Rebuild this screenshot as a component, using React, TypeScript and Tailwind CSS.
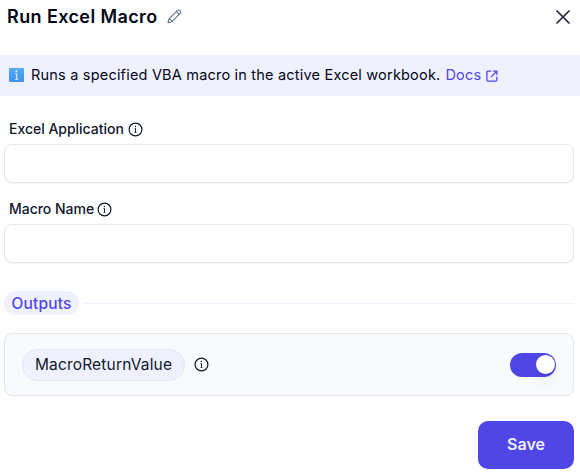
import React from "react";

function InfoIcon({ className = "" }: { className?: string }) {
  return (
    <svg className={"shrink-0 " + className} width="15" height="15" viewBox="0 0 15 15" fill="none" stroke="currentColor">
      <circle cx="7.5" cy="7.5" r="6.4" strokeWidth="1.2" />
      <path d="M6.5 6.6h1v3.9" strokeWidth="1" />
      <path d="M6.4 10.5h2.2" strokeWidth=".6" />
      <circle cx="7.4" cy="4.6" r=".75" fill="currentColor" stroke="none" />
    </svg>
  );
}

function PencilIcon() {
  return (
    <svg className="shrink-0 text-[#64748b]" width="15" height="15" viewBox="0 0 15 15" fill="none" stroke="currentColor" strokeWidth="1.1" strokeLinejoin="round" strokeLinecap="round">
      <path d="M1 13.6l.9-3.8 8.4-8.2a1.9 1.9 0 0 1 2.9 0 1.9 1.9 0 0 1 0 2.8l-8.3 8.3L1 13.6zM9.4 2.6l2.9 2.9M2.1 10c1.5.2 2.4 1 2.7 2.6" />
    </svg>
  );
}

function DocsIcon() {
  return (
    <svg className="mt-[2px] shrink-0" width="12" height="12" viewBox="0 0 12 12" fill="none" stroke="currentColor" strokeWidth="1.3" strokeLinejoin="round" strokeLinecap="round">
      <path d="M4.8 1.2H1.9a1 1 0 0 0-1 1v7.9a1 1 0 0 0 1 1h7.9a1 1 0 0 0 1-1V7.1M7.5 1.1h3.4v3.4M10.8 1.2L5.4 6.6" />
    </svg>
  );
}

function BlueInfo() {
  return (
    <svg className="mr-2 shrink-0" width="15" height="14" viewBox="0 0 15 14">
      <defs>
        <linearGradient id="tile" x1="0" y1="0" x2="0" y2="1">
          <stop offset="0" stopColor="#58aaf7" />
          <stop offset="1" stopColor="#3d92ee" />
        </linearGradient>
      </defs>
      <rect width="15" height="14" rx="1" fill="url(#tile)" />
      <path d="M6 5.7h1.7v5.6M6 11.3h3.3" fill="none" stroke="#e5f2ff" strokeWidth="1.1" />
      <circle cx="7.4" cy="3.2" r="1" fill="#e5f2ff" />
    </svg>
  );
}

function Field({ label, gap }: { label: string; gap: string }) {
  return (
    <div className="h-20 pl-1 pr-1.5">
      <label className={"flex h-[24px] items-center pb-[6px] pl-[5px] text-[14px] font-medium " + gap}>
        <span className="-mt-px tracking-[-0.02px]">{label}</span>
        <InfoIcon />
      </label>
      <input className="block h-[39px] w-full rounded-lg border border-[#e2e8f0] bg-white px-3 shadow-xs outline-none" />
    </div>
  );
}

export default function App() {
  return (
    <main className="h-[474px] w-[580px] overflow-hidden bg-white font-['Inter',sans-serif] text-[#0f172a]">
      <header className="flex h-[55px] items-start justify-between pl-[7px] pr-[10px]">
        <div className="flex h-8 items-center gap-[9.5px]">
          <h1 className="text-[18px] font-semibold tracking-[0.4px] text-[#020617]">Run Excel Macro</h1>
          <PencilIcon />
        </div>
        <svg className="mt-[10px] text-[#1e293b]" width="14" height="14" viewBox="0 0 14 14" fill="none" stroke="currentColor" strokeWidth="1.7" strokeLinecap="round">
          <path d="M1 1l12 12M13 1L1 13" />
        </svg>
      </header>
      <div className="mb-[24px] flex h-[41px] items-center bg-[#f0f1ff] pb-[2px] pl-[9px] text-[14.5px] tracking-[0.2px]">
        <BlueInfo />
        <span className="-ml-px text-[#020617]">Runs a specified VBA macro in the active Excel workbook.</span>
        <a className="ml-[5px] flex items-center gap-[5px] text-[#4f46e5]">Docs <DocsIcon /></a>
      </div>
      <Field label="Excel Application" gap="gap-1" />
      <Field label="Macro Name" gap="gap-[3px]" />
      <div className="mt-[11px] flex h-6 items-center gap-[5px] pl-1 pr-1.5">
        <span className="flex h-6 w-[75px] items-center justify-center rounded-full bg-[#f0f1ff] pt-px text-[15.5px] font-medium tracking-[0.15px] text-[#4f46e5]">Outputs</span>
        <span className="mt-px h-px flex-1 bg-[#f0f1ff]" />
      </div>
      <section className="ml-1 mr-1.5 mt-[18px] flex h-[63px] items-center rounded-lg border border-[#e2e8f0] bg-[#f8fafc] px-[17px]">
        <span className="flex h-8 w-[163px] items-center justify-center rounded-full border border-[#e2e8f0] bg-[#f0f1ff] text-[15.5px] tracking-[0.17px]">MacroReturnValue</span>
        <InfoIcon className="ml-[9px] -mt-px" />
        <span className="ml-auto flex h-6 w-[46px] items-center justify-end rounded-full bg-[#4f46e5] pb-px pr-px"><span className="size-[19px] rounded-full bg-white shadow-lg" /></span>
      </section>
      <div className="mt-[25px] flex justify-end pr-1.5">
        <button className="h-12 w-24 rounded-[10px] bg-[#4f46e5] pb-0.5 text-[16px] font-semibold text-[#eef2ff]">Save</button>
      </div>
    </main>
  );
}
